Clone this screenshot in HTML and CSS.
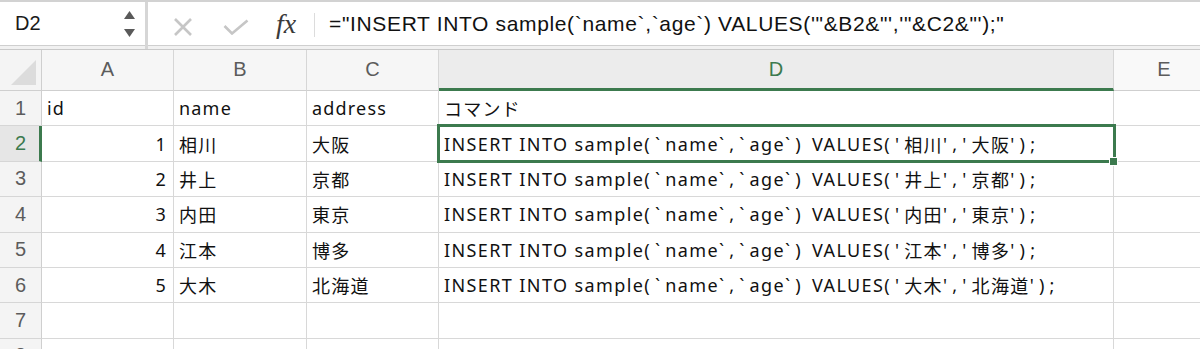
FILE: index.html
```html
<!DOCTYPE html>
<html lang="ja">
<head>
<meta charset="utf-8">
<title>Sheet</title>
<link rel="stylesheet" href="styles.css">
</head>
<body>
<div class="app">
  <div class="fbar">
    <div class="namebox">
      <span class="ref">D2</span>
      <div class="spin">
        <svg width="11" height="8" viewBox="0 0 11 8"><polygon points="5.5,0 11,8 0,8" fill="#5a5a5a"/></svg>
        <svg width="11" height="8" viewBox="0 0 11 8"><polygon points="0,0 11,0 5.5,8" fill="#5a5a5a"/></svg>
      </div>
    </div>
    <div class="tools">
      <svg class="ic-x" width="20" height="18" viewBox="0 0 20 18"><path d="M2 1 L18 17 M18 1 L2 17" stroke="#c6c6c6" stroke-width="2.6" fill="none"/></svg>
      <svg class="ic-ok" width="26" height="16" viewBox="0 0 26 16"><path d="M1.5 7 L9 14.5 L24.5 1.5" stroke="#c6c6c6" stroke-width="2.6" fill="none"/></svg>
      <span class="fx">fx</span>
    </div>
    <div class="sep"></div>
    <div class="formula">="INSERT INTO sample(`name`,`age`) VALUES('"&amp;B2&amp;"','"&amp;C2&amp;"');"</div>
  </div>
  <div class="sheet">
    <div class="corner"><span class="tri"></span></div>
    <div class="ch">A</div>
    <div class="ch">B</div>
    <div class="ch">C</div>
    <div class="ch ch-sel">D</div>
    <div class="ch ch-last">E</div>

    <div class="rh">1</div>
    <div class="c">id</div>
    <div class="c">name</div>
    <div class="c">address</div>
    <div class="c">コマンド</div>
    <div class="c last"></div>

    <div class="rh rh-sel">2</div>
    <div class="c num">1</div>
    <div class="c">相川</div>
    <div class="c">大阪</div>
    <div class="c cmd sel">INSERT INTO sample<span class="p">(`</span>name<span class="p">`,`</span>age<span class="p">`)</span> VALUES<span class="p">('</span>相川<span class="p">','</span>大阪<span class="p">');</span><span class="selbox"></span><span class="handle"></span></div>
    <div class="c last"></div>

    <div class="rh">3</div>
    <div class="c num">2</div>
    <div class="c">井上</div>
    <div class="c">京都</div>
    <div class="c cmd">INSERT INTO sample<span class="p">(`</span>name<span class="p">`,`</span>age<span class="p">`)</span> VALUES<span class="p">('</span>井上<span class="p">','</span>京都<span class="p">');</span></div>
    <div class="c last"></div>

    <div class="rh">4</div>
    <div class="c num">3</div>
    <div class="c">内田</div>
    <div class="c">東京</div>
    <div class="c cmd">INSERT INTO sample<span class="p">(`</span>name<span class="p">`,`</span>age<span class="p">`)</span> VALUES<span class="p">('</span>内田<span class="p">','</span>東京<span class="p">');</span></div>
    <div class="c last"></div>

    <div class="rh">5</div>
    <div class="c num">4</div>
    <div class="c">江本</div>
    <div class="c">博多</div>
    <div class="c cmd">INSERT INTO sample<span class="p">(`</span>name<span class="p">`,`</span>age<span class="p">`)</span> VALUES<span class="p">('</span>江本<span class="p">','</span>博多<span class="p">');</span></div>
    <div class="c last"></div>

    <div class="rh">6</div>
    <div class="c num">5</div>
    <div class="c">大木</div>
    <div class="c">北海道</div>
    <div class="c cmd">INSERT INTO sample<span class="p">(`</span>name<span class="p">`,`</span>age<span class="p">`)</span> VALUES<span class="p">('</span>大木<span class="p">','</span>北海道<span class="p">');</span></div>
    <div class="c last"></div>

    <div class="rh">7</div>
    <div class="c"></div>
    <div class="c"></div>
    <div class="c"></div>
    <div class="c"></div>
    <div class="c last"></div>

    <div class="rh">8</div>
    <div class="c"></div>
    <div class="c"></div>
    <div class="c"></div>
    <div class="c"></div>
    <div class="c last"></div>
  </div>
</div>
</body>
</html>
```

FILE: styles.css
```css
* { box-sizing: border-box; }
html, body { margin: 0; padding: 0; }
body {
  width: 1200px;
  height: 349px;
  overflow: hidden;
  background: #fff;
  font-family: "Noto Sans", "Noto Sans CJK JP", sans-serif;
}
.app { width: 1200px; }

/* formula bar */
.fbar {
  height: 50px;
  display: flex;
  align-items: stretch;
  border-top: 2px solid #d2d2d2;
  border-bottom: 1px solid #c9c9c9;
  box-shadow: inset 0 -3px 0 #f1f1f1, inset 0 -4px 0 #cfcfcf;
  background: #fff;
}
.namebox {
  width: 148px;
  display: flex;
  align-items: center;
  justify-content: space-between;
  padding: 0 10px 4px 15px;
  border-right: 3px solid #d6d6d6;
}
.ref {
  font-family: "Liberation Sans", sans-serif;
  font-size: 20px;
  color: #1a1a1a;
}
.spin {
  display: flex;
  flex-direction: column;
  gap: 10px;
  padding-top: 1px;
}
.spin svg { display: block; }
.tools {
  display: flex;
  align-items: center;
  padding: 0 0 4px 25px;
  width: 166px;
}
.ic-x { margin-right: 30px; margin-top: 6px; }
.ic-ok { margin-right: 28px; margin-top: 6px; }
.fx {
  font-family: "Liberation Serif", serif;
  font-style: italic;
  font-size: 28px;
  color: #3a3a3a;
  margin-left: -1px;
}
.sep {
  width: 1px;
  background: #dcdcdc;
  margin: 11px 0 12px 0;
}
.formula {
  flex: 1;
  display: flex;
  align-items: center;
  padding: 0 0 3px 14px;
  font-family: "Liberation Sans", sans-serif;
  font-size: 21px;
  letter-spacing: 0.65px;
  color: #111;
  white-space: nowrap;
}

/* sheet */
.sheet {
  display: grid;
  grid-template-columns: 42px 132px 133px 132px 675px 100px;
  grid-template-rows: 41px repeat(8, 35.4px);
  font-size: 18px;
  letter-spacing: 1.2px;
  color: #111;
}
.corner {
  position: relative;
  background: #f4f4f4;
  border-right: 1px solid #cfcfcf;
  border-bottom: 1px solid #cfcfcf;
}
.tri {
  position: absolute;
  right: 5px;
  bottom: 5px;
  width: 0;
  height: 0;
  border-left: 25px solid transparent;
  border-bottom: 25px solid #dcdcdc;
}
.ch {
  background: #f6f6f6;
  border-right: 1px solid #d6d6d6;
  border-bottom: 1px solid #cfcfcf;
  display: flex;
  align-items: center;
  justify-content: center;
  font-family: "Liberation Sans", sans-serif;
  font-size: 20px;
  letter-spacing: 0;
  color: #5c5c5c;
  padding-bottom: 2px;
}
.ch-sel {
  background: #ececec;
  color: #3c7a4e;
  border-bottom: 3px solid #3c7a4e;
  padding-bottom: 0;
}
.ch-last { background: #f9f9f9; border-right: none; }
.rh {
  background: #f4f4f4;
  border-right: 1px solid #cfcfcf;
  border-bottom: 1px solid #d6d6d6;
  display: flex;
  align-items: center;
  justify-content: center;
  font-family: "Liberation Sans", sans-serif;
  font-size: 20px;
  letter-spacing: 0;
  color: #5c5c5c;
}
.rh-sel {
  background: #e6e6e6;
  color: #3c7a4e;
  border-right: 3px solid #3c7a4e;
  padding-left: 2px;
}
.c {
  border-right: 1px solid #d8d8d8;
  border-bottom: 1px solid #d8d8d8;
  display: flex;
  align-items: center;
  padding: 0 4px 0 5px;
  white-space: nowrap;
  overflow: visible;
}
.c.last { border-right: none; }
.num { justify-content: flex-end; padding-right: 6px; }
.cmd { white-space: pre; letter-spacing: 1.4px; }
.cmd .p { letter-spacing: 5.2px; }
.sel { position: relative; }
.selbox {
  position: absolute;
  left: -2px;
  top: -2px;
  right: -3px;
  bottom: -2px;
  border: 3px solid #3c7a4e;
  pointer-events: none;
}
.handle {
  position: absolute;
  right: -5px;
  bottom: -5px;
  width: 9px;
  height: 9px;
  background: #3c7a4e;
  border: 1px solid #fff;
}
```
